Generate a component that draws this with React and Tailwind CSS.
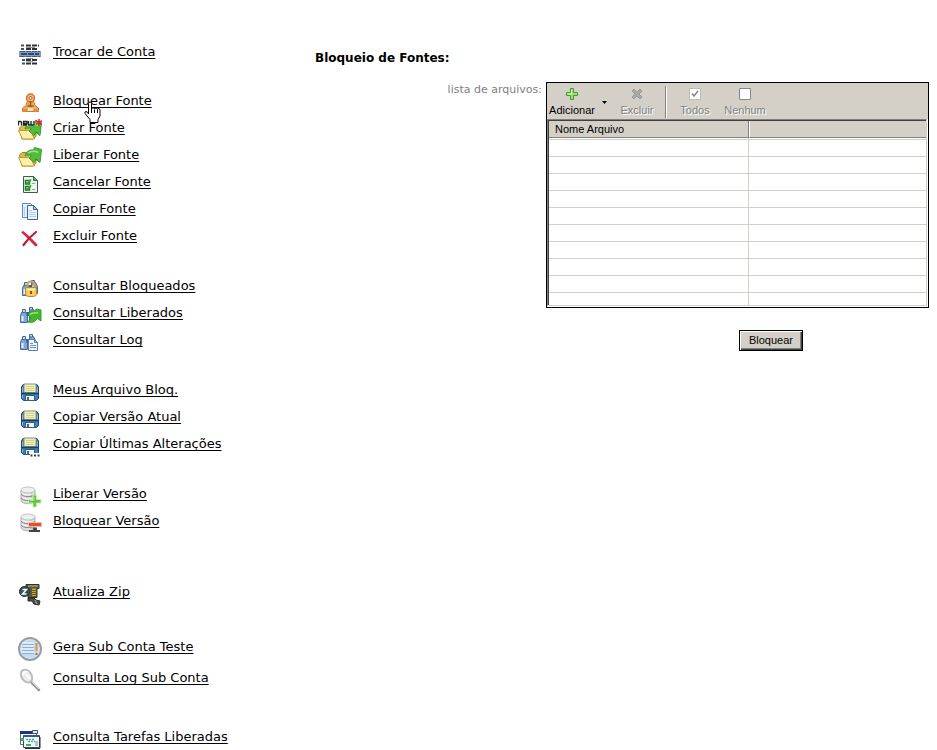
import { useState } from 'react';

const TrocarIcon = () => (
  <>
    <path d="M3 2.500h3v2H3zM3 6h3v2H3zM4 17h3v2H4zM4 20.500h3v2H4z" fill="#4a505c" />
    <path d="M1 9h22v6H1z" fill="#7f9cc0" />
    <path d="M2 9.500h20M2 14.500h20" stroke="#42587a" strokeDasharray="5 1" />
    <path d="M3 12h18" stroke="#33496b" strokeWidth="2" strokeDasharray="6 1" />
    <path d="M8 3.500h13M8 7h12M8 18h11M8 21.500h11" stroke="#2c3038" strokeWidth="2" strokeDasharray="5 1" />
    <path d="M8 5.500h9M8 16.500h7M8 19.800h7" stroke="#8d929c" />
  </>
);

const StampIcon = () => (
  <>
    <path d="M4.500 17 8 14.500l1.500-5h6l1.500 5 3.500 2.500v3.500h-16z" fill="#f3a95d" stroke="#cc7a35" />
    <circle cx="12.500" cy="7" r="4" fill="#f9bd7d" stroke="#cc7432" strokeWidth="1.500" />
    <circle cx="12.500" cy="7" r="1.500" fill="#fff3df" stroke="#a8622a" />
    <path d="M12.500 10v5M9.500 15h6" stroke="#9c5826" strokeWidth="1.500" />
    <path d="M5 18h4v2.500H5zM16 18h4v2.500h-4z" fill="#e58c45" />
    <path d="M10 18.500h5" stroke="#fff0d5" strokeWidth="2.500" />
  </>
);

const Folder = () => (
  <>
    <path d="M1.500 10 4 7.500h5l2 2h7v9l-3 2.500H4z" fill="#dfb94e" stroke="#a98224" />
    <path d="M.5 12.500h12l4 8.500H4.500z" fill="#fdf0a8" stroke="#c29a35" />
    <path d="M7 11c1-4.500 4.500-6.500 8.500-6l1-2.500 7 2-1.500 13-4-3-2 3-5-4.500 2.500-2.500c-2.500-.8-4.500-.5-6.500.5z" fill="#52bd3c" stroke="#3a9a2e" />
    <path d="M10 8c2-1.500 5-2 8-1.500l2 1" stroke="#a4e18c" fill="none" strokeWidth="1.500" />
    <path d="m17 14 3 1" stroke="#2e8427" />
  </>
);

const CriarIcon = () => (
  <>
    <Folder />
    <path d="M0 2h17v6H0z" fill="#fff" opacity=".75" />
    <path d="M.5 7.500V3M.5 3.500h2q1 0 1 1v3M9 7H5.500V3.500H9v2H6M10.500 3v4H13V3v4h3V3" fill="none" stroke="#222" strokeWidth="1.300" />
    <path d="M21 1v7M18 2.500l6 4M24 2.500l-6 4" stroke="#e32230" strokeWidth="1.500" />
  </>
);

const CancelarIcon = () => (
  <>
    <path d="M5.500 4.500h10l4 4v12h-14z" fill="#eef5f0" stroke="#3f5a4b" />
    <path d="M15.500 4.500v4h4z" fill="#55c05a" stroke="#1f7d33" />
    <path d="M7.500 8.500h4v3.500h-4zM7.500 14.500h4V18h-4z" fill="#d5f0d2" stroke="#1d7a2e" strokeWidth="1.500" />
    <path d="m8.500 10 1.500 1.500 3-4M8.500 16l1.500 1.500 3-4" fill="none" stroke="#2fa32b" strokeWidth="1.500" />
    <path d="M14 11.500h3M14 17.500h3" stroke="#8fa79a" />
  </>
);

const CopiarIcon = () => (
  <>
    <path d="M4.500 4.500h8l3 3v11h-11z" fill="#e3eefa" stroke="#5f8fbe" />
    <path d="M9.500 6.500h6l4 4v10h-10z" fill="#f1f7ff" stroke="#356799" />
    <path d="M15.500 6.500v4h4z" fill="#a9c9e9" stroke="#356799" />
    <path d="M11 11.500h3M11 13.500h7M11 15.500h7M11 17.500h7" stroke="#b3cdea" />
    <path d="M6.500 8v9" stroke="#b8d2ec" />
  </>
);

const ExcluirIcon = () => (
  <>
    <path d="M5 6.500c4 3 8 7.500 13 12.500" stroke="#d02a45" strokeWidth="2.800" strokeLinecap="round" />
    <path d="M18 6C13 10 9 14 5.500 19" stroke="#bd1c38" strokeWidth="2.200" strokeLinecap="round" />
  </>
);

const Binoculars = () => (
  <>
    <path d="M3.500 9.500h5l1 3v7h-7v-7zM11.500 6.500h4l2 4v7h-6z" fill="#82a5d6" stroke="#45689c" />
    <path d="M4.500 6.500h3v3h-3zM11.500 4.500h3v2.500h-3z" fill="#c5daf0" stroke="#45689c" />
    <path d="M8.500 9h3v4h-3z" fill="#34588f" />
    <path d="M4.500 13v5M13.500 9.500v6" stroke="#e6f0fc" strokeWidth="2" />
  </>
);

const BloqueadosIcon = () => (
  <>
    <g transform="translate(2 0)"><Binoculars /></g>
    <path d="M9.500 12V9q0-3.500 3.500-3.500T16.500 9v3" fill="none" stroke="#c9a64c" strokeWidth="2" />
    <path d="M7.500 11.500h11v6q0 3-3 3h-5q-3 0-3-3z" fill="#f7cd58" stroke="#b98a2b" />
    <path d="M9 13.500h8" stroke="#fff3b0" strokeWidth="1.500" />
    <path d="M13 15v3" stroke="#7c602e" strokeWidth="2" />
  </>
);

const LiberadosIcon = () => (
  <>
    <Binoculars />
    <path d="M10 12c1-3 4-4.500 7.500-4l.5-2 5 1v11l-3.500-2.500c-3 4-6 4.500-9.500 3.500l3-4z" fill="#45b52f" stroke="#349a2a" />
    <path d="M12 11.500c2-2 5-2 8-1.500" fill="none" stroke="#98e17c" strokeWidth="1.500" />
  </>
);

const LogIcon = () => (
  <>
    <Binoculars />
    <path d="M10.500 9.500h6l3 3v8h-9z" fill="#edf5ff" stroke="#557fb0" />
    <path d="M16.500 9.500v3h3z" fill="#b7d3ef" stroke="#557fb0" />
    <path d="M12 13.500h3M12 15.500h6M12 17.500h6" stroke="#6c96c4" />
  </>
);

const DisketteIcon = () => (
  <>
    <path d="M3.500 7 5 4.500h14L20.500 7v11.500l-2 2h-13l-2-2z" fill="#3f7fba" stroke="#1f456c" />
    <path d="M6 4h12v8.500H6z" fill="#f0eebc" stroke="#84916f" />
    <path d="M8 6.500h8M8 8.500h8M8 10.500h8" stroke="#d4d08f" />
    <path d="M4 13.500h16" stroke="#173e68" strokeWidth="1.500" />
    <path d="M7.500 15.500h9v5h-9z" fill="#f0f5fa" stroke="#315c84" />
    <path d="M9 17h2v3H9z" fill="#4b6780" />
    <path d="M4.500 7.500v5M4.500 15v3M19.500 7.500v5" stroke="#86bce6" />
  </>
);

const DisketteDotsIcon = () => (
  <>
    <DisketteIcon />
    <path d="M12 19h12v5H12z" fill="#fff" />
    <path d="M12.500 20.500h2v2h-2zM16 20.500h2v2h-2zM19.500 20.500h2v2h-2z" fill="#363b40" />
  </>
);

const Database = () => (
  <>
    <path d="M3 6v10c0 5 14 5 14 0V6z" fill="#dcdcdc" stroke="#b0b0b0" />
    <path d="M12 7h5v11h-5z" fill="#c3c3c3" />
    <ellipse cx="10" cy="6" rx="7" ry="3" fill="#efefef" stroke="#c2c2c2" />
    <path d="M3 10c2 3.500 12 3.500 14 0M3 14c2 3.500 12 3.500 14 0" fill="none" stroke="#8a8a8a" />
    <path d="M4 9c3 2.500 9 2.500 12 0M4 13c3 2.500 9 2.500 12 0" fill="none" stroke="#fafafa" />
  </>
);

const LiberarVersaoIcon = () => (
  <>
    <Database />
    <path d="M15 11h3.500v4.500H23V19h-4.500v4H15v-4h-4.500v-3.500H15z" fill="#5cc63c" stroke="#c9eeb9" />
    <path d="M16 12.500v4h-4" stroke="#a8e68a" fill="none" />
  </>
);

const BloquearVersaoIcon = () => (
  <>
    <Database />
    <path d="M10.500 11.500h13v4h-13z" fill="#e0512f" stroke="#f0bcab" />
    <path d="M15 16.500h4V19h3v2H11v-2h4z" fill="#444" />
  </>
);

const ZipIcon = () => (
  <>
    <path d="M8 2.500h13v4h-2v9h-9v-3H8z" fill="#56583c" stroke="#2f3322" />
    <path d="M10 4h10" stroke="#a39c6c" strokeWidth="1.500" />
    <path d="M14 6.500h4V14h-4z" fill="#c9a638" />
    <path d="M14 8.500h4M14 10.500h4M14 12.500h4" stroke="#625923" />
    <circle cx="6.500" cy="9.500" r="5" fill="#36535a" stroke="#1e3034" />
    <path d="M4.500 7.500h4l-4 4.500h4" fill="none" stroke="#fff" strokeWidth="1.500" />
    <path d="M10 16h6l2 2 4 1-1 4-5-1-2-3h-4z" fill="#4c4e44" stroke="#2c2e27" />
    <path d="m17 18 2 4" stroke="#b1af99" />
  </>
);

const SubContaIcon = () => (
  <>
    <circle cx="12" cy="12" r="11" fill="#dfe6ee" stroke="#989da3" strokeWidth="2" />
    <path d="M4 6q8-6 16 0v12q-8 6-16 0z" fill="#c3daf3" />
    <path d="M4 7.500h12M4 10.500h12M4 13.500h12M4 16.500h12" stroke="#8fafd5" />
    <path d="M4 6h12M4 9h12M4 12h12M4 15h12" stroke="#f6fbff" />
    <path d="M18.500 6v8" stroke="#e49631" strokeWidth="2" />
    <path d="M18.500 16v2" stroke="#c17125" strokeWidth="2" />
  </>
);

const LupaIcon = () => (
  <>
    <path d="m13 14 8 8" stroke="#999" strokeWidth="2.500" strokeLinecap="round" />
    <path d="m13 13 8 8" stroke="#ddd" />
    <ellipse cx="8.500" cy="8" rx="5" ry="7" transform="rotate(-35 8.500 8)" fill="#ececec" stroke="#bababa" strokeWidth="1.800" />
    <path d="M5 7c0-3 3-4 5-3M8 6l4 5" stroke="#fff" strokeWidth="1.500" fill="none" />
  </>
);

const TarefasIcon = () => (
  <>
    <path d="M2.500 4.500h16v13h-16z" fill="#f4f8f2" stroke="#666d78" />
    <path d="M2 4h17v3H2z" fill="#1c3190" />
    <path d="M14.500 3.500h5v3h-5z" fill="#e3e7ee" stroke="#454c61" />
    <path d="M5.500 8.500h16v12h-16z" fill="#f4fbfd" stroke="#3c465c" />
    <path d="M6 8h15v2H6z" fill="#3657a1" />
    <path d="M8 12.500h8M10 14.500h7" stroke="#45ad76" strokeWidth="1.500" strokeDasharray="2 1" />
    <path d="M3 11h3v3H3zM8 17h5v2H8z" fill="#3fae62" />
    <path d="M17 14h3v5h-3z" fill="#a8c6e4" />
    <path d="M22 10v11M7 21.500h15" stroke="#222b3c" />
  </>
);

const MENU = [
  { className: 'mb-[22px]', items: [['Trocar de Conta', TrocarIcon]] },
  {
    className: 'mb-[23px]',
    items: [
      ['Bloquear Fonte', StampIcon],
      ['Criar Fonte', CriarIcon],
      ['Liberar Fonte', Folder],
      ['Cancelar Fonte', CancelarIcon],
      ['Copiar Fonte', CopiarIcon],
      ['Excluir Fonte', ExcluirIcon],
    ],
  },
  {
    className: 'mb-[23px]',
    items: [
      ['Consultar Bloqueados', BloqueadosIcon],
      ['Consultar Liberados', LiberadosIcon],
      ['Consultar Log', LogIcon],
    ],
  },
  {
    className: 'mb-[23px]',
    items: [
      ['Meus Arquivo Bloq.', DisketteIcon],
      ['Copiar Versão Atual', DisketteIcon],
      ['Copiar Últimas Alterações', DisketteDotsIcon],
    ],
  },
  {
    className: 'mb-11',
    items: [
      ['Liberar Versão', LiberarVersaoIcon],
      ['Bloquear Versão', BloquearVersaoIcon],
    ],
  },
  { className: 'mb-[26px]', items: [['Atualiza Zip', ZipIcon]] },
  {
    className: 'mb-[30px]',
    tall: true,
    items: [
      ['Gera Sub Conta Teste', SubContaIcon],
      ['Consulta Log Sub Conta', LupaIcon],
    ],
  },
  { className: '', items: [['Consulta Tarefas Liberadas', TarefasIcon]] },
];

function HandCursor() {
  return (
    <svg viewBox="0 0 17 22" className="absolute z-10 left-[31px] top-2 w-[17px] h-[22px] pointer-events-none" aria-hidden="true">
      <path
        d="M4.500 13V2.500q0-1.500 1.500-1.500t1.500 1.500V8q0-1.200 1.500-1.200T10.500 8q0-1 1.500-1t1.500 1.500q0-1 1.200-1T16 9v6l-2 3.500v3H6v-3L1 12.500q-.5-2 1-2t2.500 2.500z"
        fill="#fff"
        stroke="#000"
      />
      <path d="M7.500 8v4M10.500 8.500V12M13.500 9v3" stroke="#000" />
    </svg>
  );
}

function MenuItem({ label, Icon, tall }) {
  return (
    <li className={tall ? 'flex items-center gap-[11px] h-[31px]' : 'flex items-center gap-[11px] h-[27px]'}>
      <svg viewBox="0 0 24 24" fill="none" className="w-6 h-6 mt-1 shrink-0" aria-hidden="true">
        <Icon />
      </svg>
      <a href="#" className="relative text-[13px] leading-4 text-black underline underline-offset-2 decoration-1 [text-decoration-skip-ink:none]">
        {label}
        {label === 'Bloquear Fonte' && <HandCursor />}
      </a>
    </li>
  );
}

function ToolButton({ label, disabled, onClick, className, children }) {
  return (
    <button
      type="button"
      disabled={disabled}
      onClick={onClick}
      className={`flex flex-col items-center gap-px text-[11px] leading-[14px] text-black disabled:text-[#808080] disabled:[text-shadow:1px_1px_0_#fff] ${className}`}
    >
      <svg viewBox="0 0 16 16" fill="none" className="w-4 h-4" aria-hidden="true">
        {children}
      </svg>
      {label}
    </button>
  );
}

function FileList({ files, onAdd }) {
  const rows = Array.from({ length: 9 }, (_, i) => files[i] || '');

  return (
    <div className="flex-1 mr-2 border border-black bg-white font-['Liberation_Sans',Arial,sans-serif]">
      {/* Toolbar */}
      <div className="flex items-start h-9 pt-[3px] bg-[#d4d0c8]">
        <ToolButton label="Adicionar" onClick={onAdd} className="w-[50px]">
          <path d="M6.500 2.500h3v4h4v3h-4v4h-3v-4h-4v-3h4z" fill="#9ee26d" stroke="#3f9a35" />
          <path d="M7.500 4v4H4" stroke="#dcffc2" />
        </ToolButton>
        <button type="button" aria-label="Opções de adicionar" className="w-[15px] h-8 flex items-center justify-center">
          <svg viewBox="0 0 5 3" className="w-[5px] h-[3px]" aria-hidden="true">
            <path d="M0 0h5L2.500 3z" fill="#000" />
          </svg>
        </button>
        <ToolButton label="Excluir" disabled className="w-[50px]">
          <path d="m3 5 2-2 3 3 3-3 2 2-3 3 3 3-2 2-3-3-3 3-2-2 3-3z" fill="#aaa8a3" stroke="#9b9993" />
        </ToolButton>
        <div className="w-[2px] h-8 ml-[3px] mr-[3px] border-l border-[#808080] bg-white" />
        <ToolButton label="Todos" disabled className="w-[50px]">
          <path d="M2.500 2.500h11v11h-11z" fill="#fff" stroke="#bbb" />
          <path d="m5 7.500 2 2.500 4-5" stroke="#858585" strokeWidth="1.500" />
        </ToolButton>
        <ToolButton label="Nenhum" disabled className="w-[50px]">
          <path d="M2.500 2.500h11v11h-11z" fill="#fff" stroke="#888" />
        </ToolButton>
      </div>

      {/* Grid */}
      <div className="mr-px mb-px border border-l-[#808080] border-t-[#808080] border-r-[#d4d0c8] border-b-[#d4d0c8]">
        <div className="border-l border-t border-[#404040]">
          <table className="w-full table-fixed border-separate border-spacing-0 text-[11px] leading-[14px]">
            <colgroup>
              <col className="w-[53%]" />
              <col />
            </colgroup>
            <thead>
              <tr className="h-[17px]">
                <th scope="col" className="p-0 pl-[6px] text-left font-normal bg-[#d4d0c8] border-b border-r border-[#808080]">
                  Nome Arquivo
                </th>
                <th scope="col" className="p-0 bg-[#d4d0c8] border-b border-l border-b-[#808080] border-l-white" />
              </tr>
            </thead>
            <tbody>
              <tr className="h-[2px]">
                <td className="p-0 border-b border-r border-[#d4d0c8]" />
                <td className="p-0 border-b border-[#d4d0c8]" />
              </tr>
              {rows.map((name, i) => (
                <tr key={i} className="h-[17px]">
                  <td className="p-0 pl-[6px] border-b border-r border-[#d4d0c8]">{name}</td>
                  <td className="p-0 border-b border-[#d4d0c8]" />
                </tr>
              ))}
              <tr className="h-3">
                <td className="p-0 border-r border-[#d4d0c8]" />
                <td className="p-0" />
              </tr>
            </tbody>
          </table>
        </div>
      </div>
    </div>
  );
}

export default function App() {
  const [files, setFiles] = useState([]);

  const addFile = () => {
    setFiles((prev) => [...prev, `arquivo${prev.length + 1}.txt`]);
  };

  return (
    <div className="flex items-start bg-white text-black font-['DejaVu_Sans',Verdana,sans-serif]">
      {/* Menu */}
      <nav className="w-[315px] shrink-0 pl-[18px] pt-[38px]">
        {MENU.map((group, i) => (
          <ul key={i} className={group.className}>
            {group.items.map(([label, Icon]) => (
              <MenuItem key={label} label={label} Icon={Icon} tall={group.tall} />
            ))}
          </ul>
        ))}
      </nav>

      {/* Form */}
      <main className="flex-1 pt-[50px]">
        <h1 className="text-[12px] leading-4 font-bold">Bloqueio de Fontes:</h1>
        <div className="flex items-start mt-4">
          <div className="w-[231px] shrink-0 pr-1 pt-px text-right text-[11px] leading-[14px] text-[#808080]">
            lista de arquivos:
          </div>
          <FileList files={files} onAdd={addFile} />
        </div>
        <div className="mt-[22px] pl-[424px]">
          <button
            type="button"
            className="block w-16 h-[21px] border border-black bg-[#d4d0c8] text-[11px] leading-none font-['Liberation_Sans',Arial,sans-serif] shadow-[inset_1px_1px_0_#fff,inset_-1px_-1px_0_#404040,inset_-2px_-2px_0_#808080]"
          >
            Bloquear
          </button>
        </div>
      </main>
    </div>
  );
}
